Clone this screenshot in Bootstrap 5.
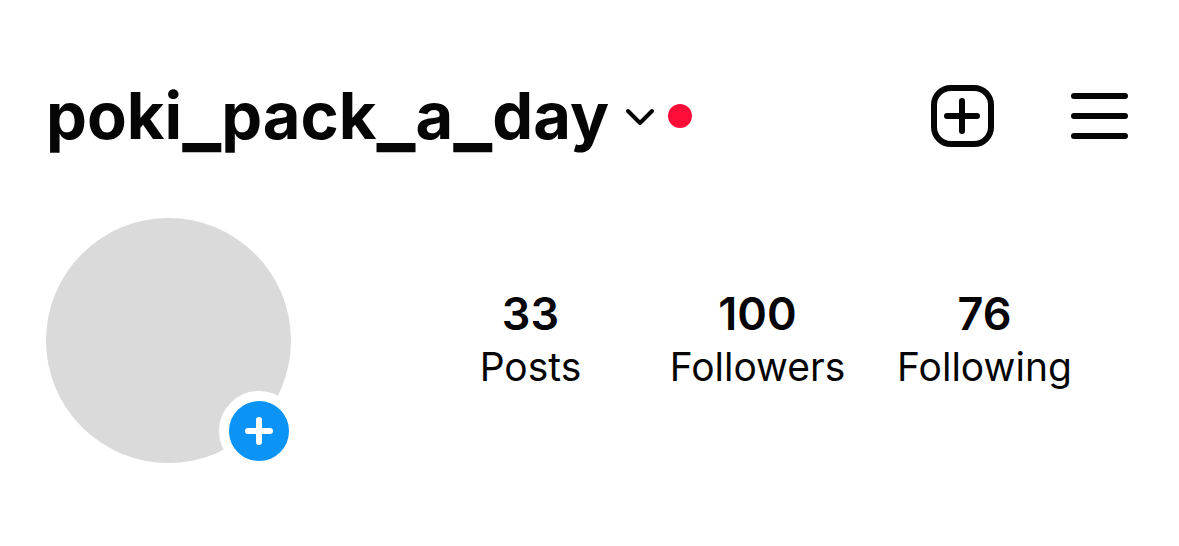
<!DOCTYPE html>
<html lang="en">
<head>
<meta charset="utf-8">
<meta name="viewport" content="width=device-width, initial-scale=1">
<title>poki_pack_a_day</title>
<link href="https://cdn.jsdelivr.net/npm/bootstrap@5.3.0/dist/css/bootstrap.min.css" rel="stylesheet">
<style>
body { font-family: Inter, "Liberation Sans", sans-serif; color: #050505; background: #fff; }
.profile-page { padding: 76px 51px 80px 46px; }
.plain { border: 0; background: none; padding: 0; color: inherit; }
.top-bar { height: 80px; }
.user-name { font-size: 65px; line-height: 80px; font-weight: 700; }
.user-name span { font-size: 82px; line-height: 0; vertical-align: -4px; }
.new-dot { width: 24px; height: 24px; background: #fd0d38; margin-left: 13px; }
.header-actions { gap: 76px; }
.avatar { width: 245px; height: 245px; background: #dadada; }
.add-story { right: -8px; bottom: -8px; width: 80px; height: 80px; background: #0b93f6; border: 10px solid #fff; color: #fff; }
.profile-row { margin-top: 62px; }
.stats { margin-right: 30px; padding-bottom: 2px; }
.stat { color: inherit; width: 227px; }
.stat-value { font-size: 45px; line-height: 54px; font-weight: 600; }
.stat-name { font-size: 39px; line-height: 52px; }
svg { display: block; fill: none; stroke: currentColor; stroke-linecap: round; stroke-linejoin: round; }
</style>
</head>
<body>
<main class="profile-page">
<header class="top-bar d-flex align-items-center justify-content-between">
<button type="button" class="plain d-flex align-items-center">
<span class="user-name">poki<span>_</span>pack<span>_</span>a<span>_</span>day</span>
<svg class="ms-3" width="30" height="20" viewBox="0 0 30 20" stroke-width="4" aria-hidden="true"><path d="M3 5l12 12L27 5"/></svg>
<span class="new-dot rounded-circle"></span>
</button>
<div class="header-actions d-flex align-items-center">
<button type="button" class="plain" aria-label="Create"><svg width="64" height="64" viewBox="0 0 64 64" stroke-width="6"><rect x="4" y="4" width="57" height="56" rx="17"/><path d="M32 17v30M17 32h30"/></svg></button>
<button type="button" class="plain" aria-label="Menu"><svg width="58" height="50" viewBox="0 0 58 50" stroke-width="6"><path d="M4 5h51M4 25h51M4 45h51"/></svg></button>
</div>
</header>
<section class="profile-row d-flex align-items-center justify-content-between">
<div class="position-relative">
<div class="avatar rounded-circle"></div>
<button type="button" class="add-story position-absolute rounded-circle d-flex align-items-center justify-content-center p-0" aria-label="Add story"><svg width="32" height="32" viewBox="0 0 32 32" stroke-width="6"><path d="M16 5v22M5 16h22"/></svg></button>
</div>
<nav class="stats d-flex text-center" aria-label="Profile statistics">
<a href="#posts" class="stat text-decoration-none"><div class="stat-value">33</div><div class="stat-name">Posts</div></a>
<a href="#followers" class="stat text-decoration-none"><div class="stat-value">100</div><div class="stat-name">Followers</div></a>
<a href="#following" class="stat text-decoration-none"><div class="stat-value">76</div><div class="stat-name">Following</div></a>
</nav>
</section>
</main>
<script src="https://cdn.jsdelivr.net/npm/bootstrap@5.3.0/dist/js/bootstrap.bundle.min.js"></script>
</body>
</html>
